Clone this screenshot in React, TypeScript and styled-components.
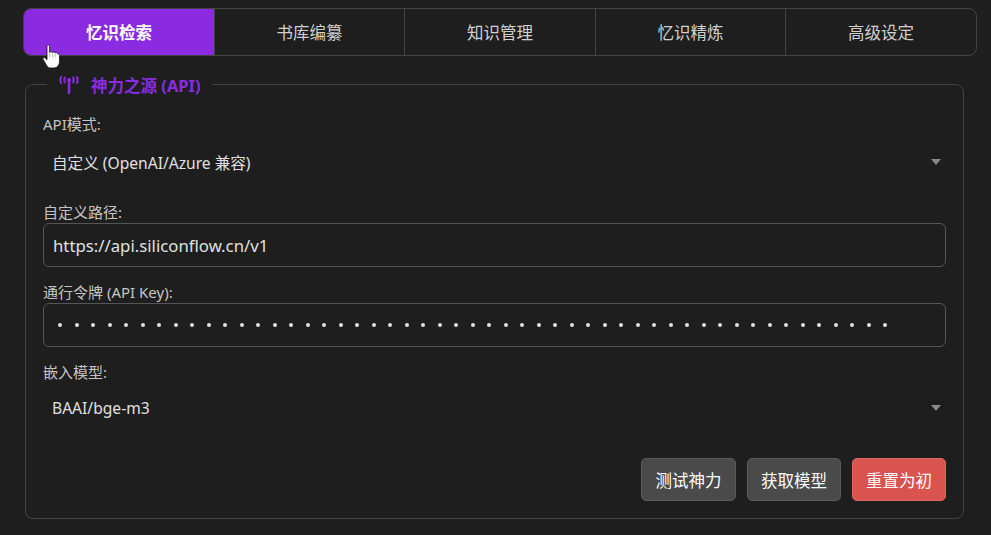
import React from "react";
import styled, { createGlobalStyle } from "styled-components";

const Global = createGlobalStyle`
  html, body { margin: 0; padding: 0; background: #1e1e1e; }
  body { font-family: "Noto Sans", "Noto Sans CJK SC", sans-serif; color: #e0e0e0; }
  * { box-sizing: border-box; }
`;

const Page = styled.div`
  position: relative;
  width: 991px;
  height: 535px;
  padding: 8px 14px 0 23px;
  overflow: hidden;
`;

const TabBar = styled.div`
  display: grid;
  grid-template-columns: 191px 190px 191px 190px 1fr;
  height: 48px;
  border: 1px solid #444;
  border-radius: 8px;
  overflow: hidden;
`;

const Tab = styled.div<{ $active?: boolean }>`
  display: flex;
  align-items: center;
  justify-content: center;
  font-size: 16.5px;
  font-weight: ${(p) => (p.$active ? 700 : 400)};
  color: ${(p) => (p.$active ? "#fff" : "#d0d0d0")};
  background: ${(p) => (p.$active ? "#8a2be2" : "transparent")};
  border-right: 1px solid #444;
  &:last-child { border-right: 0; }
`;

const Panel = styled.fieldset`
  margin: 16px 13px 0 2px;
  padding: 0 17px 17px;
  height: 447px;
  border: 1px solid #444;
  border-radius: 8px;
  min-width: 0;
`;

const Legend = styled.legend`
  display: flex;
  align-items: center;
  gap: 12px;
  margin-left: 4px;
  padding: 2px 11px 0 12px;
  height: 24px;
  font-size: 16.5px;
  font-weight: 700;
  color: #8a2be2;
`;

const Field = styled.div`
  display: flex;
  flex-direction: column;
`;

const Label = styled.div<{ $first?: boolean }>`
  height: 20px;
  line-height: 20px;
  margin-top: ${(p) => (p.$first ? "18px" : "0")};
  font-size: 15px;
  color: #c4c4c4;
`;

const SelectRow = styled.div<{ $mt: number; $mb: number }>`
  display: flex;
  align-items: center;
  justify-content: space-between;
  height: 44px;
  padding: 0 5px 0 9px;
  margin-top: ${(p) => p.$mt}px;
  margin-bottom: ${(p) => p.$mb}px;
  font-size: 15.6px;
  color: #e0e0e0;
`;

const Caret = styled.span`
  width: 0;
  height: 0;
  border-left: 5px solid transparent;
  border-right: 5px solid transparent;
  border-top: 6px solid #888;
`;

const InputBox = styled.div<{ $mb: number }>`
  display: flex;
  align-items: center;
  height: 44px;
  margin-top: 1px;
  margin-bottom: ${(p) => p.$mb}px;
  padding: 0 9px;
  border: 1px solid #555;
  border-radius: 6px;
  background: #1e1e1e;
  font-size: 16.75px;
  color: #e0e0e0;
`;

const Dots = styled.div`
  display: flex;
  gap: 12.5px;
  padding-left: 5px;
`;

const Dot = styled.span`
  width: 4px;
  height: 4px;
  border-radius: 50%;
  background: #e6e2da;
`;

const Actions = styled.div`
  display: flex;
  justify-content: flex-end;
  gap: 11px;
  margin-top: 28px;
`;

const Button = styled.div<{ $danger?: boolean; $w: number }>`
  display: flex;
  align-items: center;
  justify-content: center;
  width: ${(p) => p.$w}px;
  height: 43px;
  border-radius: 5px;
  border: 1px solid ${(p) => (p.$danger ? "#e06666" : "#5a5a5a")};
  background: ${(p) => (p.$danger ? "#d9534f" : "#4a4a4a")};
  color: #fff;
  font-size: 16.5px;
`;

const Pointer = styled.svg`
  position: absolute;
  left: 42px;
  top: 44px;
`;

const Antenna = () => (
  <svg width="20" height="18" viewBox="0 0 20 18" fill="none" stroke="#8a2be2" strokeWidth="2" strokeLinecap="round">
    <path d="M10 5v12" strokeWidth="2.6" />
    <circle cx="10" cy="4" r="2" fill="#8a2be2" stroke="none" />
    <path d="M5.8 1.5c-.5 1.4-.5 3.4 0 5M2 1c-.7 1.8-.7 4.4 0 6M14.2 1.5c.5 1.4.5 3.4 0 5M18 1c.7 1.8.7 4.4 0 6" />
  </svg>
);

const Hand = () => (
  <Pointer width="20" height="26" viewBox="0 0 20 26">
    <path
      d="M5 2.4c0-1.8 2.6-1.8 2.6 0V8.5c.4-1.2 2.6-1.2 2.8.2.3-1 2.5-1 2.7.4.4-.9 2.4-.6 2.5.7 1-.2 1.9.4 1.9 1.5V17c0 4-2.2 7-5.5 7H9c-2.2 0-3.4-1-4.4-2.6L1.2 15.5c-.8-1.4.9-2.6 2-1.5L5 15.8Z"
      fill="#fff"
      stroke="#111"
      strokeWidth="0.8"
    />
    <path d="M7.8 9.5v4M10.4 9.5v4M13.1 10v3.5" stroke="#999" strokeWidth="0.7" />
  </Pointer>
);

const tabs = ["忆识检索", "书库编纂", "知识管理", "忆识精炼", "高级设定"];

export default function App() {
  return (
    <Page>
      <Global />
      <TabBar>
        {tabs.map((t, i) => (
          <Tab key={t} $active={i === 0}>{t}</Tab>
        ))}
      </TabBar>
      <Panel>
        <Legend><Antenna />神力之源 (API)</Legend>
        <Field>
          <Label $first>API模式:</Label>
          <SelectRow $mt={6} $mb={18}>自定义 (OpenAI/Azure 兼容)<Caret /></SelectRow>
          <Label>自定义路径:</Label>
          <InputBox $mb={15}>https://api.siliconflow.cn/v1</InputBox>
          <Label>通行令牌 (API Key):</Label>
          <InputBox $mb={15}>
            <Dots>{Array.from({ length: 51 }, (_, i) => <Dot key={i} />)}</Dots>
          </InputBox>
          <Label>嵌入模型:</Label>
          <SelectRow $mt={4} $mb={0}>BAAI/bge-m3<Caret /></SelectRow>
        </Field>
        <Actions>
          <Button $w={95}>测试神力</Button>
          <Button $w={94}>获取模型</Button>
          <Button $w={94} $danger>重置为初</Button>
        </Actions>
      </Panel>
      <Hand />
    </Page>
  );
}
